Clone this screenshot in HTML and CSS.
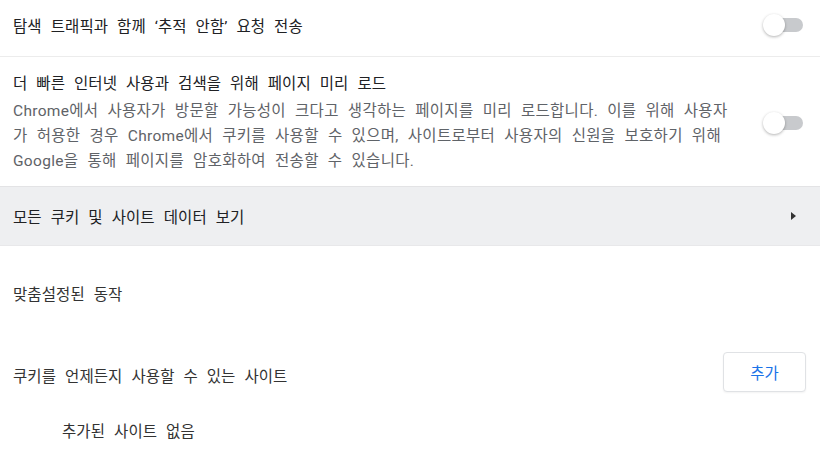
FILE: index.html
```html
<!DOCTYPE html>
<html lang="ko">
<head>
<meta charset="UTF-8">
<title>쿠키 및 기타 사이트 데이터</title>
<link rel="stylesheet" href="styles.css">
</head>
<body>

<div class="setting first">
	<div class="label">탐색 트래픽과 함께 ‘추적 안함’ 요청 전송</div>
	<div class="toggle"><span class="knob"></span></div>
</div>

<div class="setting second">
	<div class="label">
		<div class="title">더 빠른 인터넷 사용과 검색을 위해 페이지 미리 로드</div>
		<div class="desc">Chrome에서 사용자가 방문할 가능성이 크다고 생각하는 페이지를 미리 로드합니다. 이를 위해 사용자가 허용한 경우 Chrome에서 쿠키를 사용할 수 있으며, 사이트로부터 사용자의 신원을 보호하기 위해 Google을 통해 페이지를 암호화하여 전송할 수 있습니다.</div>
	</div>
	<div class="toggle"><span class="knob"></span></div>
</div>

<div class="setting link-row">
	<div class="label">모든 쿠키 및 사이트 데이터 보기</div>
	<span class="arrow"></span>
</div>

<div class="section-title">맞춤설정된 동작</div>

<div class="setting add-row">
	<div class="label">쿠키를 언제든지 사용할 수 있는 사이트</div>
	<button class="add-button">추가</button>
</div>

<div class="empty">추가된 사이트 없음</div>

</body>
</html>
```

FILE: styles.css
```css
body
{
	margin: 0;
	background-color: #ffffff;
	font-family: Roboto, "Noto Sans CJK KR", sans-serif;
	font-size: 15.5px;
	word-spacing: 5px;
	letter-spacing: 0.1px;
	color: #202124;
}

.setting
{
	display: flex;
	align-items: center;
	justify-content: space-between;
	padding: 0 14px 0 13px;
}

.first
{
	height: 50px;
	padding-bottom: 6px;
	border-bottom: 1px solid #ececec;
}

.second
{
	padding-top: 14px;
	padding-bottom: 12px;
}

.second .label
{
	width: 725px;
	line-height: 25px;
}

.title
{
	line-height: 26px;
	margin-bottom: 2px;
}

.desc
{
	color: #5f6368;
	word-spacing: 5px;
	letter-spacing: 0.3px;
}

.toggle
{
	position: relative;
	width: 33px;
	height: 14px;
	margin-right: 3px;
	border-radius: 7px;
	background-color: #c8cacd;
}

.knob
{
	position: absolute;
	left: -7px;
	top: -4px;
	width: 22px;
	height: 22px;
	border-radius: 50%;
	background-color: #ffffff;
	box-shadow: 0 1px 3px rgba(0, 0, 0, 0.3);
}

.link-row
{
	height: 58px;
	background-color: #eeeff1;
	border-top: 1px solid #e3e3e5;
	border-bottom: 1px solid #e8e8ea;
}

.arrow
{
	width: 0;
	height: 0;
	margin-right: 10px;
	border-top: 4.5px solid transparent;
	border-bottom: 4.5px solid transparent;
	border-left: 5px solid #333333;
}

.section-title
{
	padding: 37px 13px 0;
	line-height: 24px;
	color: #333333;
}

.add-row
{
	margin-top: 45px;
	height: 40px;
}

.add-row .label
{
	padding-top: 6px;
	color: #333333;
}

.add-button
{
	width: 83px;
	height: 40px;
	border: 1px solid #e0e2e5;
	border-radius: 4px;
	background-color: #ffffff;
	color: #1a73e8;
	font-family: inherit;
	font-size: 15.5px;
	box-shadow: 0 1px 2px rgba(0, 0, 0, 0.05);
}

.empty
{
	padding: 28px 62px 0;
	line-height: 24px;
	color: #333333;
}
```
